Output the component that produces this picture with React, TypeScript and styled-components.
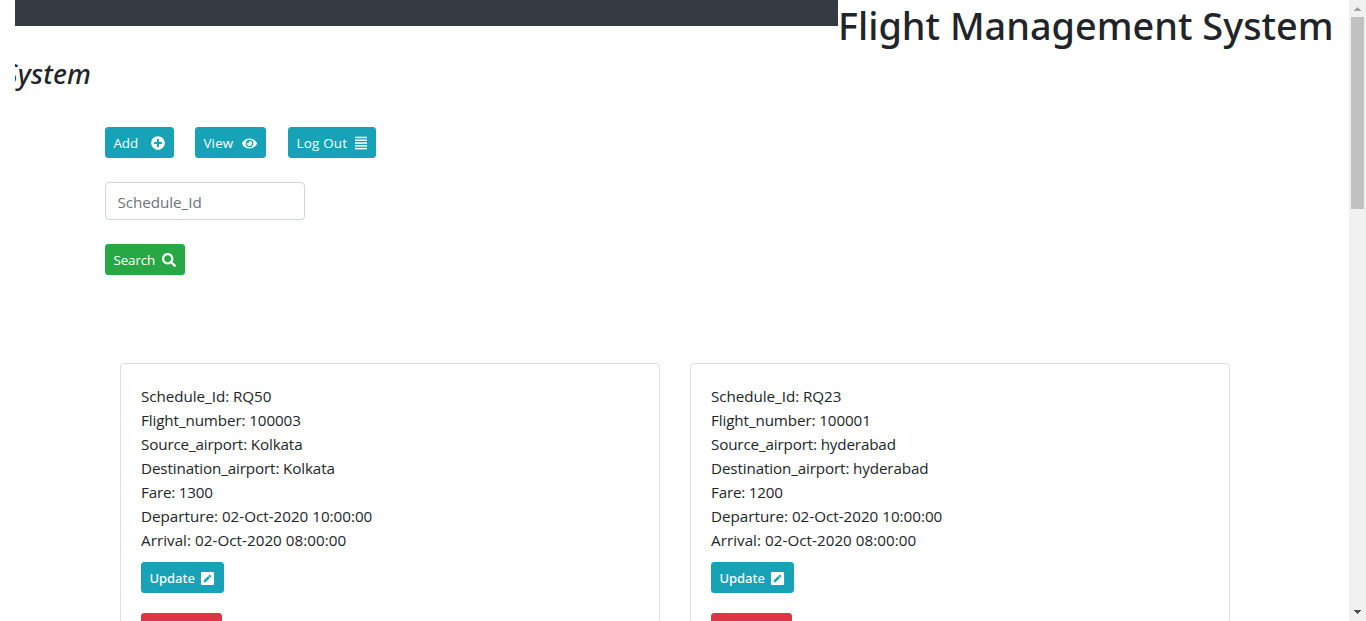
import React from "react";
import styled, { createGlobalStyle } from "styled-components";
import { FaEye, FaPenSquare, FaPlusCircle, FaSearch, FaTrash } from "react-icons/fa";

const GlobalStyle = createGlobalStyle`
  *, *::before, *::after { box-sizing: border-box; }
  body {
    margin: 0;
    overflow: hidden;
    background: #fff;
    color: #212529;
    font: 400 15.2px/24px "Segoe UI", "Open Sans", sans-serif;
  }
`;

const Window = styled.div`
  display: flex;
  width: 100%;
  height: 100vh;
  overflow: hidden;
`;

const Page = styled.main`
  flex: 1;
  min-width: 0;
  padding-left: 15px;
  overflow: hidden;
`;

const Header = styled.header`
  display: flex;
  align-items: flex-start;
  height: 55px;
`;

const NavBar = styled.nav`
  width: 823px;
  height: 26px;
  background: #363a43;
`;

const Title = styled.h1`
  margin: 0;
  padding-top: 2px;
  font: 500 37.85px/48px "Segoe UI", "Noto Sans", sans-serif;
  white-space: nowrap;
`;

const Marquee = styled.div`
  display: flex;
  justify-content: flex-end;
  width: 76px;
  height: 72px;
  overflow: hidden;
  font: italic 500 27px/37px "Segoe UI", "Noto Sans", sans-serif;
  letter-spacing: 0.15px;
  white-space: nowrap;
`;

const Content = styled.section`
  padding-left: 90px;
`;

const Actions = styled.div`
  display: flex;
`;

const Button = styled.button<{ $tone?: string; $width: number; $after?: number; $spacing?: number; $medium?: boolean }>`
  display: flex;
  align-items: center;
  justify-content: space-between;
  width: ${(p) => p.$width}px;
  height: 31px;
  margin: 0 ${(p) => p.$after ?? 0}px 0 0;
  padding: 1px 8px 0 7.4px;
  border: 1px solid ${(p) => p.$tone ?? "#17a2b8"};
  border-radius: 3px;
  background: ${(p) => p.$tone ?? "#17a2b8"};
  color: #fff;
  font: ${(p) => (p.$medium ? '500 13px/21px "Segoe UI", "Noto Sans"' : '400 13.4px/21px "Segoe UI", "Open Sans"')}, sans-serif;
  letter-spacing: ${(p) => p.$spacing ?? 0}px;
  white-space: nowrap;

  svg { flex: none; }
`;

const SearchForm = styled.form`
  display: flex;
  flex-direction: column;
  align-items: flex-start;
  gap: 24px;
  margin-top: 24px;
`;

const Input = styled.input`
  width: 200px;
  height: 38px;
  padding: 2px 12px 0 11.5px;
  border: 1px solid #ced4da;
  border-radius: 4px;
  font: inherit;
  letter-spacing: -0.04px;

  &::placeholder { color: #6c757d; opacity: 1; }
`;

const Cards = styled.div`
  display: grid;
  grid-template-columns: 540px 540px;
  gap: 30px;
  margin: 88px 0 0 15px;
`;

const Card = styled.article`
  padding: 20px;
  border: 1px solid #dfdfdf;
  border-radius: 4px;
`;

const Field = styled.div<{ $spacing: number }>`
  height: 24px;
  letter-spacing: ${(p) => p.$spacing}px;
  white-space: nowrap;
`;

const CardActions = styled.div`
  display: flex;
  flex-direction: column;
  gap: 20px;
  margin-top: 10px;
`;

const ScrollTrack = styled.div`
  display: flex;
  flex-direction: column;
  align-items: center;
  justify-content: space-between;
  width: 17px;
  background: #f1f1f1;
`;

const ScrollTop = styled.div`
  display: flex;
  flex-direction: column;
  align-items: center;
`;

const Thumb = styled.div`
  width: 13px;
  height: 192px;
  background: #c1c1c1;
`;

const Arrow = ({ down = false }: { down?: boolean }) => (
  <svg width="17" height="17" viewBox="0 0 17 17" shapeRendering="crispEdges" display="block">
    <path d={down ? "M5 6h7v1h-1v1h-1v1h-1v1h-1v-1h-1v-1h-1v-1h-1z" : "M8 7h1v1h1v1h1v1h1v1h-7v-1h1v-1h1v-1h1z"} fill={down ? "#505050" : "#a3a3a3"} />
  </svg>
);

const LinesIcon = () => (
  <svg width="12" height="14" viewBox="0 0 12 14" fill="#fff">
    {[0.7, 3.5, 6.3, 9.1, 11.9].map((y) => (
      <rect key={y} x="0" y={y} width="12" height="1.5" />
    ))}
  </svg>
);

type Line = [text: string, spacing: number];

const schedules: Line[][] = [
  [
    ["Schedule_Id: RQ50", -0.04],
    ["Flight_number: 100003", -0.1],
    ["Source_airport: Kolkata", -0.13],
    ["Destination_airport: Kolkata", -0.12],
    ["Fare: 1300", -0.2],
    ["Departure: 02-Oct-2020 10:00:00", 0],
    ["Arrival: 02-Oct-2020 08:00:00", 0.04],
  ],
  [
    ["Schedule_Id: RQ23", -0.04],
    ["Flight_number: 100001", -0.1],
    ["Source_airport: hyderabad", -0.14],
    ["Destination_airport: hyderabad", -0.12],
    ["Fare: 1200", -0.2],
    ["Departure: 02-Oct-2020 10:00:00", 0],
    ["Arrival: 02-Oct-2020 08:00:00", 0.04],
  ],
];

export default function App() {
  return (
    <>
      <GlobalStyle />
      <Window>
        <Page>
          <Header>
            <NavBar />
            <Title>Flight Management System</Title>
          </Header>
          <Marquee>Flight Management System</Marquee>
          <Content>
            <Actions>
              <Button $width={69} $after={21}>Add <FaPlusCircle size={14} /></Button>
              <Button $width={71} $after={22} $spacing={0.2}>View <FaEye size={15} /></Button>
              <Button $width={88} $spacing={0.25}>Log Out <LinesIcon /></Button>
            </Actions>
            <SearchForm onSubmit={(e) => e.preventDefault()}>
              <Input placeholder="Schedule_Id" />
              <Button $width={80} $tone="#28a745" $spacing={-0.1}>Search <FaSearch size={14} /></Button>
            </SearchForm>
            <Cards>
              {schedules.map((lines) => (
                <Card key={lines[0][0]}>
                  {lines.map(([text, spacing]) => (
                    <Field key={text} $spacing={spacing}>{text}</Field>
                  ))}
                  <CardActions>
                    <Button $width={83} $medium>Update <FaPenSquare size={15} /></Button>
                    <Button $width={81} $tone="#dc3545" $medium>Delete <FaTrash size={14} /></Button>
                  </CardActions>
                </Card>
              ))}
            </Cards>
          </Content>
        </Page>
        <ScrollTrack>
          <ScrollTop>
            <Arrow />
            <Thumb />
          </ScrollTop>
          <Arrow down />
        </ScrollTrack>
      </Window>
    </>
  );
}
